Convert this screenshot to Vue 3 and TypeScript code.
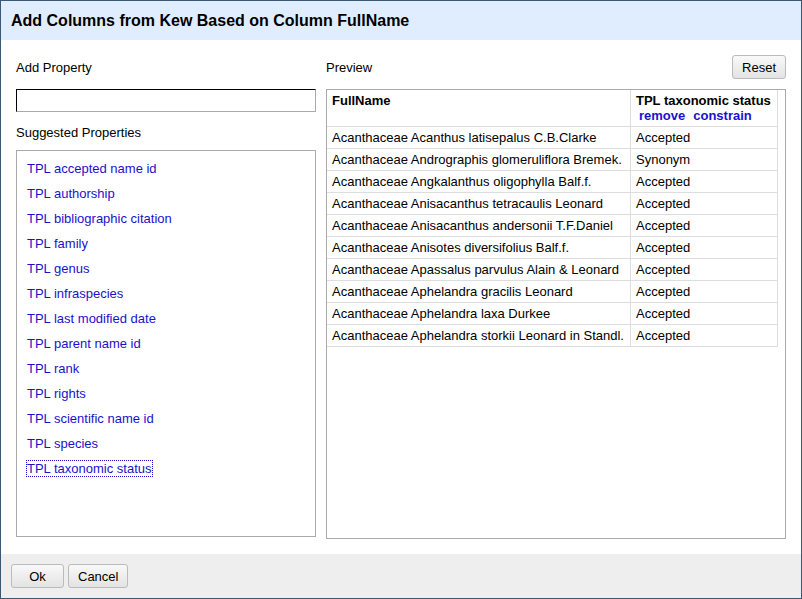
<script setup lang="ts">
import { ref } from 'vue'

interface PreviewRow {
  name: string
  status: string
}

const query = ref('')
const selected = ref('TPL taxonomic status')

const properties: string[] = [
  'TPL accepted name id',
  'TPL authorship',
  'TPL bibliographic citation',
  'TPL family',
  'TPL genus',
  'TPL infraspecies',
  'TPL last modified date',
  'TPL parent name id',
  'TPL rank',
  'TPL rights',
  'TPL scientific name id',
  'TPL species',
  'TPL taxonomic status',
]

const rows: PreviewRow[] = [
  { name: 'Acanthaceae Acanthus latisepalus C.B.Clarke', status: 'Accepted' },
  { name: 'Acanthaceae Andrographis glomeruliflora Bremek.', status: 'Synonym' },
  { name: 'Acanthaceae Angkalanthus oligophylla Balf.f.', status: 'Accepted' },
  { name: 'Acanthaceae Anisacanthus tetracaulis Leonard', status: 'Accepted' },
  { name: 'Acanthaceae Anisacanthus andersonii T.F.Daniel', status: 'Accepted' },
  { name: 'Acanthaceae Anisotes diversifolius Balf.f.', status: 'Accepted' },
  { name: 'Acanthaceae Apassalus parvulus Alain & Leonard', status: 'Accepted' },
  { name: 'Acanthaceae Aphelandra gracilis Leonard', status: 'Accepted' },
  { name: 'Acanthaceae Aphelandra laxa Durkee', status: 'Accepted' },
  { name: 'Acanthaceae Aphelandra storkii Leonard in Standl.', status: 'Accepted' },
]
</script>

<template>
  <section class="dialog" role="dialog" aria-labelledby="dialog-title">
    <header class="dialog-header">
      <h1 id="dialog-title">Add Columns from Kew Based on Column FullName</h1>
    </header>

    <div class="dialog-body">
      <div class="picker">
        <label class="caption" for="property-input">Add Property</label>
        <input id="property-input" v-model="query" class="property-input" type="text" />
        <h2 class="caption suggested-caption">Suggested Properties</h2>
        <ul class="suggestions">
          <li v-for="property in properties" :key="property">
            <a
              href="#"
              :class="{ selected: property === selected }"
              @click.prevent="selected = property"
            >{{ property }}</a>
          </li>
        </ul>
      </div>

      <div class="preview">
        <div class="preview-bar">
          <h2 class="caption">Preview</h2>
          <button type="button" class="button">Reset</button>
        </div>
        <div class="preview-pane">
          <table>
            <thead>
              <tr>
                <th class="name-column" scope="col">FullName</th>
                <th class="status-column" scope="col">
                  TPL taxonomic status
                  <div class="column-actions">
                    <a href="#" @click.prevent>remove</a>
                    <a href="#" @click.prevent>constrain</a>
                  </div>
                </th>
              </tr>
            </thead>
            <tbody>
              <tr v-for="row in rows" :key="row.name">
                <td>{{ row.name }}</td>
                <td>{{ row.status }}</td>
              </tr>
            </tbody>
          </table>
        </div>
      </div>
    </div>

    <footer class="dialog-footer">
      <button type="button" class="button">Ok</button>
      <button type="button" class="button">Cancel</button>
    </footer>
  </section>
</template>

<style>
body {
  margin: 0;
}
</style>

<style scoped>
.dialog,
.dialog * {
  box-sizing: border-box;
}

.dialog {
  display: flex;
  flex-direction: column;
  min-height: 100vh;
  border: 1px solid #3a5774;
  background: #fff;
  color: #000;
  font-family: 'Liberation Sans', Arial, sans-serif;
  font-size: 13px;
  line-height: 15px;
}

.dialog-header {
  padding: 10px;
  background: #e0edfe;
}

h1 {
  margin: 0;
  font-size: 16px;
  font-weight: bold;
  line-height: 19px;
}

.dialog-body {
  flex: 1;
  display: grid;
  grid-template-columns: 300px 1fr;
  gap: 10px;
  padding: 15px;
}

.picker,
.preview {
  display: flex;
  flex-direction: column;
  min-width: 0;
}

.picker {
  padding-bottom: 2px;
}

.caption {
  margin: 0;
  padding: 5px 0 4px;
  font-size: 13px;
  font-weight: normal;
  line-height: 15px;
}

.property-input {
  width: 100%;
  height: 23px;
  margin: 10px 0 8px;
  padding: 2px 4px;
  border: 1px solid #aaa;
  border-top-color: #000;
  border-left-color: #000;
  border-radius: 0;
  background: #fff;
  font: inherit;
  outline: none;
}

.suggested-caption {
  margin-bottom: 6px;
}

.suggestions {
  flex: 1;
  margin: 0;
  padding: 5px 10px;
  border: 1px solid #aaa;
  list-style: none;
}

.suggestions li {
  line-height: 25px;
}

a {
  color: #1a11cc;
  text-decoration: none;
}

.suggestions a.selected {
  outline: 1px dotted #1a11cc;
}

.preview-bar {
  display: flex;
  align-items: center;
  justify-content: space-between;
  margin-bottom: 10px;
}

.preview-pane {
  flex: 1;
  border: 1px solid #aaa;
  overflow: auto;
}

table {
  border-collapse: separate;
  border-spacing: 0;
}

th,
td {
  padding: 3px 5px;
  border-right: 1px solid #ddd;
  border-bottom: 1px solid #ddd;
  text-align: left;
  vertical-align: top;
  white-space: nowrap;
}

.name-column {
  min-width: 304px;
}

.status-column {
  min-width: 147px;
}

.column-actions {
  display: flex;
  gap: 8px;
  padding-left: 3px;
}

.button {
  min-width: 53px;
  height: 24px;
  padding: 0 9px;
  border: 1px solid #bbb;
  border-radius: 3px;
  background: linear-gradient(#f9f9f9, #e3e3e3);
  color: #000;
  font: inherit;
}

.dialog-footer {
  display: flex;
  gap: 4px;
  padding: 10px;
  background: #eee;
}
</style>
